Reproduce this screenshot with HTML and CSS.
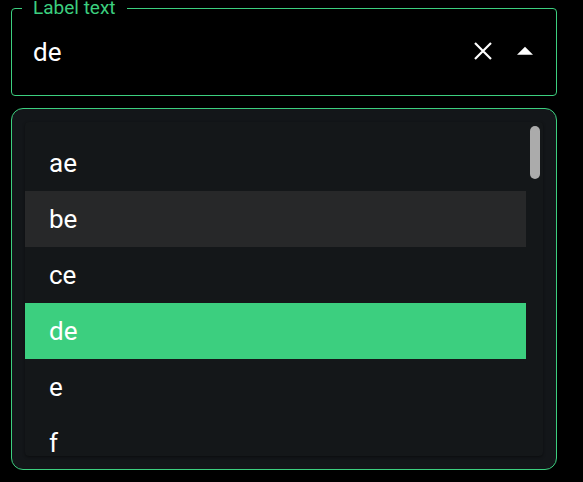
FILE: index.html
```html
<!DOCTYPE html>
<html>
<head>
<meta charset="utf-8">
<link rel="stylesheet" href="styles.css">
</head>
<body>
<div class="wrap">
  <fieldset class="field">
    <legend class="label">Label text</legend>
    <div class="field-row">
      <span class="value">de</span>
      <svg class="icon-clear" width="24" height="24" viewBox="0 0 24 24"><path d="M4 4 L20 20 M20 4 L4 20" stroke="#fff" stroke-width="2.2" fill="none"/></svg>
      <svg class="icon-arrow" width="24" height="24" viewBox="0 0 24 24"><polygon points="4,15.8 12,7.8 20,15.8" fill="#fff"/></svg>
    </div>
  </fieldset>
  <div class="panel">
    <div class="list">
      <div class="item">ae</div>
      <div class="item hover">be</div>
      <div class="item">ce</div>
      <div class="item selected">de</div>
      <div class="item">e</div>
      <div class="item">f</div>
    </div>
    <div class="scroll-thumb"></div>
  </div>
</div>
</body>
</html>
```

FILE: styles.css
```css
html, body {
  margin: 0;
  padding: 0;
  background: #000;
  font-family: Roboto, "Noto Sans", sans-serif;
  color: #fff;
}
.wrap {
  width: 546px;
  margin-left: 11px;
  display: flex;
  flex-direction: column;
  gap: 12px;
}
.field {
  margin: 0;
  padding: 0 19px 9px 21px;
  border: 1px solid #3ccf7f;
  border-radius: 4px;
  min-width: 0;
}
.label {
  margin-left: -11px;
  padding: 0 11px;
  font-size: 19px;
  line-height: 16px;
  color: #3ccf7f;
}
.field-row {
  height: 70px;
  display: flex;
  align-items: center;
}
.value {
  flex: 1;
  font-size: 26px;
  line-height: 68px;
  padding-top: 2px;
}
.icon-clear {
  display: block;
  margin-right: 18px;
}
.icon-arrow {
  display: block;
}
.panel {
  position: relative;
  height: 334px;
  padding: 13px;
  background: #131619;
  border: 1px solid #3ccf7f;
  border-radius: 12px;
}
.list {
  height: 321px;
  padding-top: 13px;
  overflow: hidden;
  background: #141719;
  border-radius: 4px;
  box-shadow: 0 1px 3px rgba(0, 0, 0, 0.45);
}
.item {
  height: 56px;
  margin-right: 17px;
  padding-left: 24px;
  font-size: 26px;
  line-height: 56px;
}
.item.hover {
  background: #272829;
}
.item.selected {
  background: #3ccf7f;
}
.scroll-thumb {
  position: absolute;
  left: 518px;
  top: 17px;
  width: 10px;
  height: 53px;
  border-radius: 5px;
  background: #ababab;
}
```
